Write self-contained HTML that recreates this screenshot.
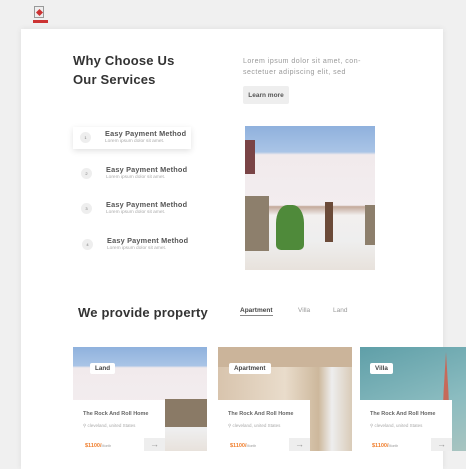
<!DOCTYPE html>
<html><head><meta charset="utf-8"><style>
*{margin:0;padding:0;box-sizing:border-box}
body{width:466px;height:465px;background:#f0f0f0;font-family:"Liberation Sans",sans-serif;position:relative;overflow:hidden}
.a{position:absolute}
.panel{left:21px;top:29px;width:422px;height:440px;background:#fff;box-shadow:0 0 6px rgba(0,0,0,.08)}
h1{font-size:13px;font-weight:bold;color:#333;line-height:19px;letter-spacing:.2px}
.lorem{font-size:7px;color:#999;line-height:11px;letter-spacing:.5px}
.btn{background:#eee;border-radius:2px;font-size:6.5px;color:#555;height:18px;font-weight:bold;display:flex;align-items:center;justify-content:center}
.item .n{position:absolute;width:11px;height:11px;border-radius:50%;background:#eee;font-size:4px;color:#777;text-align:center;line-height:11px}
.item .t{position:absolute;font-size:7.3px;color:#555;font-weight:bold;white-space:nowrap;letter-spacing:.2px}
.item .s{position:absolute;font-size:4.8px;color:#aaa;white-space:nowrap}
.house{background:linear-gradient(#8fb1dd 0%,#a9c4e6 18%,#f1eaec 20%,#f3edef 55%,#c3a99a 56%,#f2efee 62%,#eee 80%,#e8e2dc 100%)}
.card{height:104px;overflow:hidden}
.info{background:#fff;left:0;width:92px;height:51px;bottom:0}
.tag{background:#fff;border-radius:2px;font-size:6.3px;font-weight:bold;color:#444;padding:0 5px;line-height:11px}
.ct{font-size:5.5px;color:#666;font-weight:bold;left:10px;top:11px;white-space:nowrap}
.loc{font-size:4.5px;color:#aaa;left:10px;top:23px;white-space:nowrap}
.pr{font-size:5.5px;color:#f08030;font-weight:bold;left:12px;top:43px;white-space:nowrap}
.pr span{font-size:3.5px;color:#999;font-weight:normal}
.arr{right:0;bottom:0;width:21px;height:13px;background:#eee;color:#999;font-size:9px;text-align:center;line-height:12px}
</style></head><body>
<div class="a" style="left:34px;top:6px;width:10px;height:12px;border:1px solid #999;background:#eee"></div>
<div class="a" style="left:37px;top:10px;width:5px;height:5px;background:#c33;transform:rotate(45deg)"></div>
<div class="a" style="left:33px;top:20px;width:15px;height:3px;background:#c33"></div>
<div class="a panel"></div>
<h1 class="a" style="left:73px;top:51px">Why Choose Us<br>Our Services</h1>
<div class="a lorem" style="left:243px;top:56px;width:125px">Lorem ipsum dolor sit amet, con-<br>sectetuer adipiscing elit, sed</div>
<div class="a btn" style="left:243px;top:86px;width:46px">Learn more</div>
<div class="a" style="left:73px;top:127px;width:118px;height:22px;background:#fff;box-shadow:0 2px 6px rgba(0,0,0,.12)"></div>
<div class="item">
<div class="n" style="left:80px;top:132px">1</div><div class="t" style="left:105px;top:129px">Easy Payment Method</div><div class="s" style="left:105px;top:139px">Lorem ipsum dolor sit amet.</div>
<div class="n" style="left:81px;top:168px">2</div><div class="t" style="left:106px;top:165px">Easy Payment Method</div><div class="s" style="left:106px;top:175px">Lorem ipsum dolor sit amet.</div>
<div class="n" style="left:81px;top:203px">3</div><div class="t" style="left:106px;top:200px">Easy Payment Method</div><div class="s" style="left:106px;top:210px">Lorem ipsum dolor sit amet.</div>
<div class="n" style="left:82px;top:239px">4</div><div class="t" style="left:107px;top:236px">Easy Payment Method</div><div class="s" style="left:107px;top:246px">Lorem ipsum dolor sit amet.</div>
</div>
<div class="a house" style="left:245px;top:126px;width:130px;height:144px"></div>
<div class="a" style="left:245px;top:196px;width:24px;height:55px;background:#8d7f6c"></div>
<div class="a" style="left:276px;top:205px;width:28px;height:45px;background:#4f8a3a;border-radius:40% 40% 5px 5px"></div>
<div class="a" style="left:325px;top:202px;width:8px;height:40px;background:#6b4a38"></div>
<div class="a" style="left:365px;top:205px;width:10px;height:40px;background:#8d7f6c"></div>
<div class="a" style="left:245px;top:140px;width:10px;height:34px;background:#7a4446"></div>
<div class="a" style="left:78px;top:305px;font-size:13px;font-weight:bold;color:#333;letter-spacing:.2px">We provide property</div>
<div class="a" style="left:240px;top:307px;font-size:6.5px;color:#444;font-weight:bold;border-bottom:1px solid #888;padding-bottom:1px">Apartment</div>
<div class="a" style="left:298px;top:307px;font-size:6.5px;color:#999">Villa</div>
<div class="a" style="left:333px;top:307px;font-size:6.5px;color:#999">Land</div>

<div class="a card house" style="left:73px;top:347px;width:134px">
<div class="a" style="left:92px;top:52px;width:42px;height:28px;background:#8a7a66"></div>
<div class="a tag" style="left:17px;top:16px">Land</div>
<div class="a info"><div class="a ct">The Rock And Roll Home</div><div class="a loc">⚲ cleveland, united States</div><div class="a pr">$1100/<span>Month</span></div><div class="a arr">→</div></div></div>

<div class="a card" style="left:218px;top:347px;width:134px;background:linear-gradient(90deg,#d8c4ad 0%,#e9dccb 50%,#cdb89c 75%,#eee 85%,#d9cbb8 100%)">
<div class="a" style="left:0;top:0;width:134px;height:20px;background:#cbb49a"></div>
<div class="a tag" style="left:11px;top:16px">Apartment</div>
<div class="a info"><div class="a ct">The Rock And Roll Home</div><div class="a loc">⚲ cleveland, united States</div><div class="a pr">$1100/<span>Month</span></div><div class="a arr">→</div></div></div>

<div class="a card" style="left:360px;top:347px;width:106px;background:linear-gradient(160deg,#5f9fa8,#8bbcc0 60%,#a8c4c0)">
<div class="a" style="left:80px;top:5px;width:12px;height:99px;background:#c66a5a;clip-path:polygon(50% 0,70% 40%,90% 100%,10% 100%,30% 40%)"></div>
<div class="a tag" style="left:10px;top:16px">Villa</div>
<div class="a info"><div class="a ct">The Rock And Roll Home</div><div class="a loc">⚲ cleveland, united States</div><div class="a pr">$1100/<span>Month</span></div><div class="a arr">→</div></div></div>
</body></html>
